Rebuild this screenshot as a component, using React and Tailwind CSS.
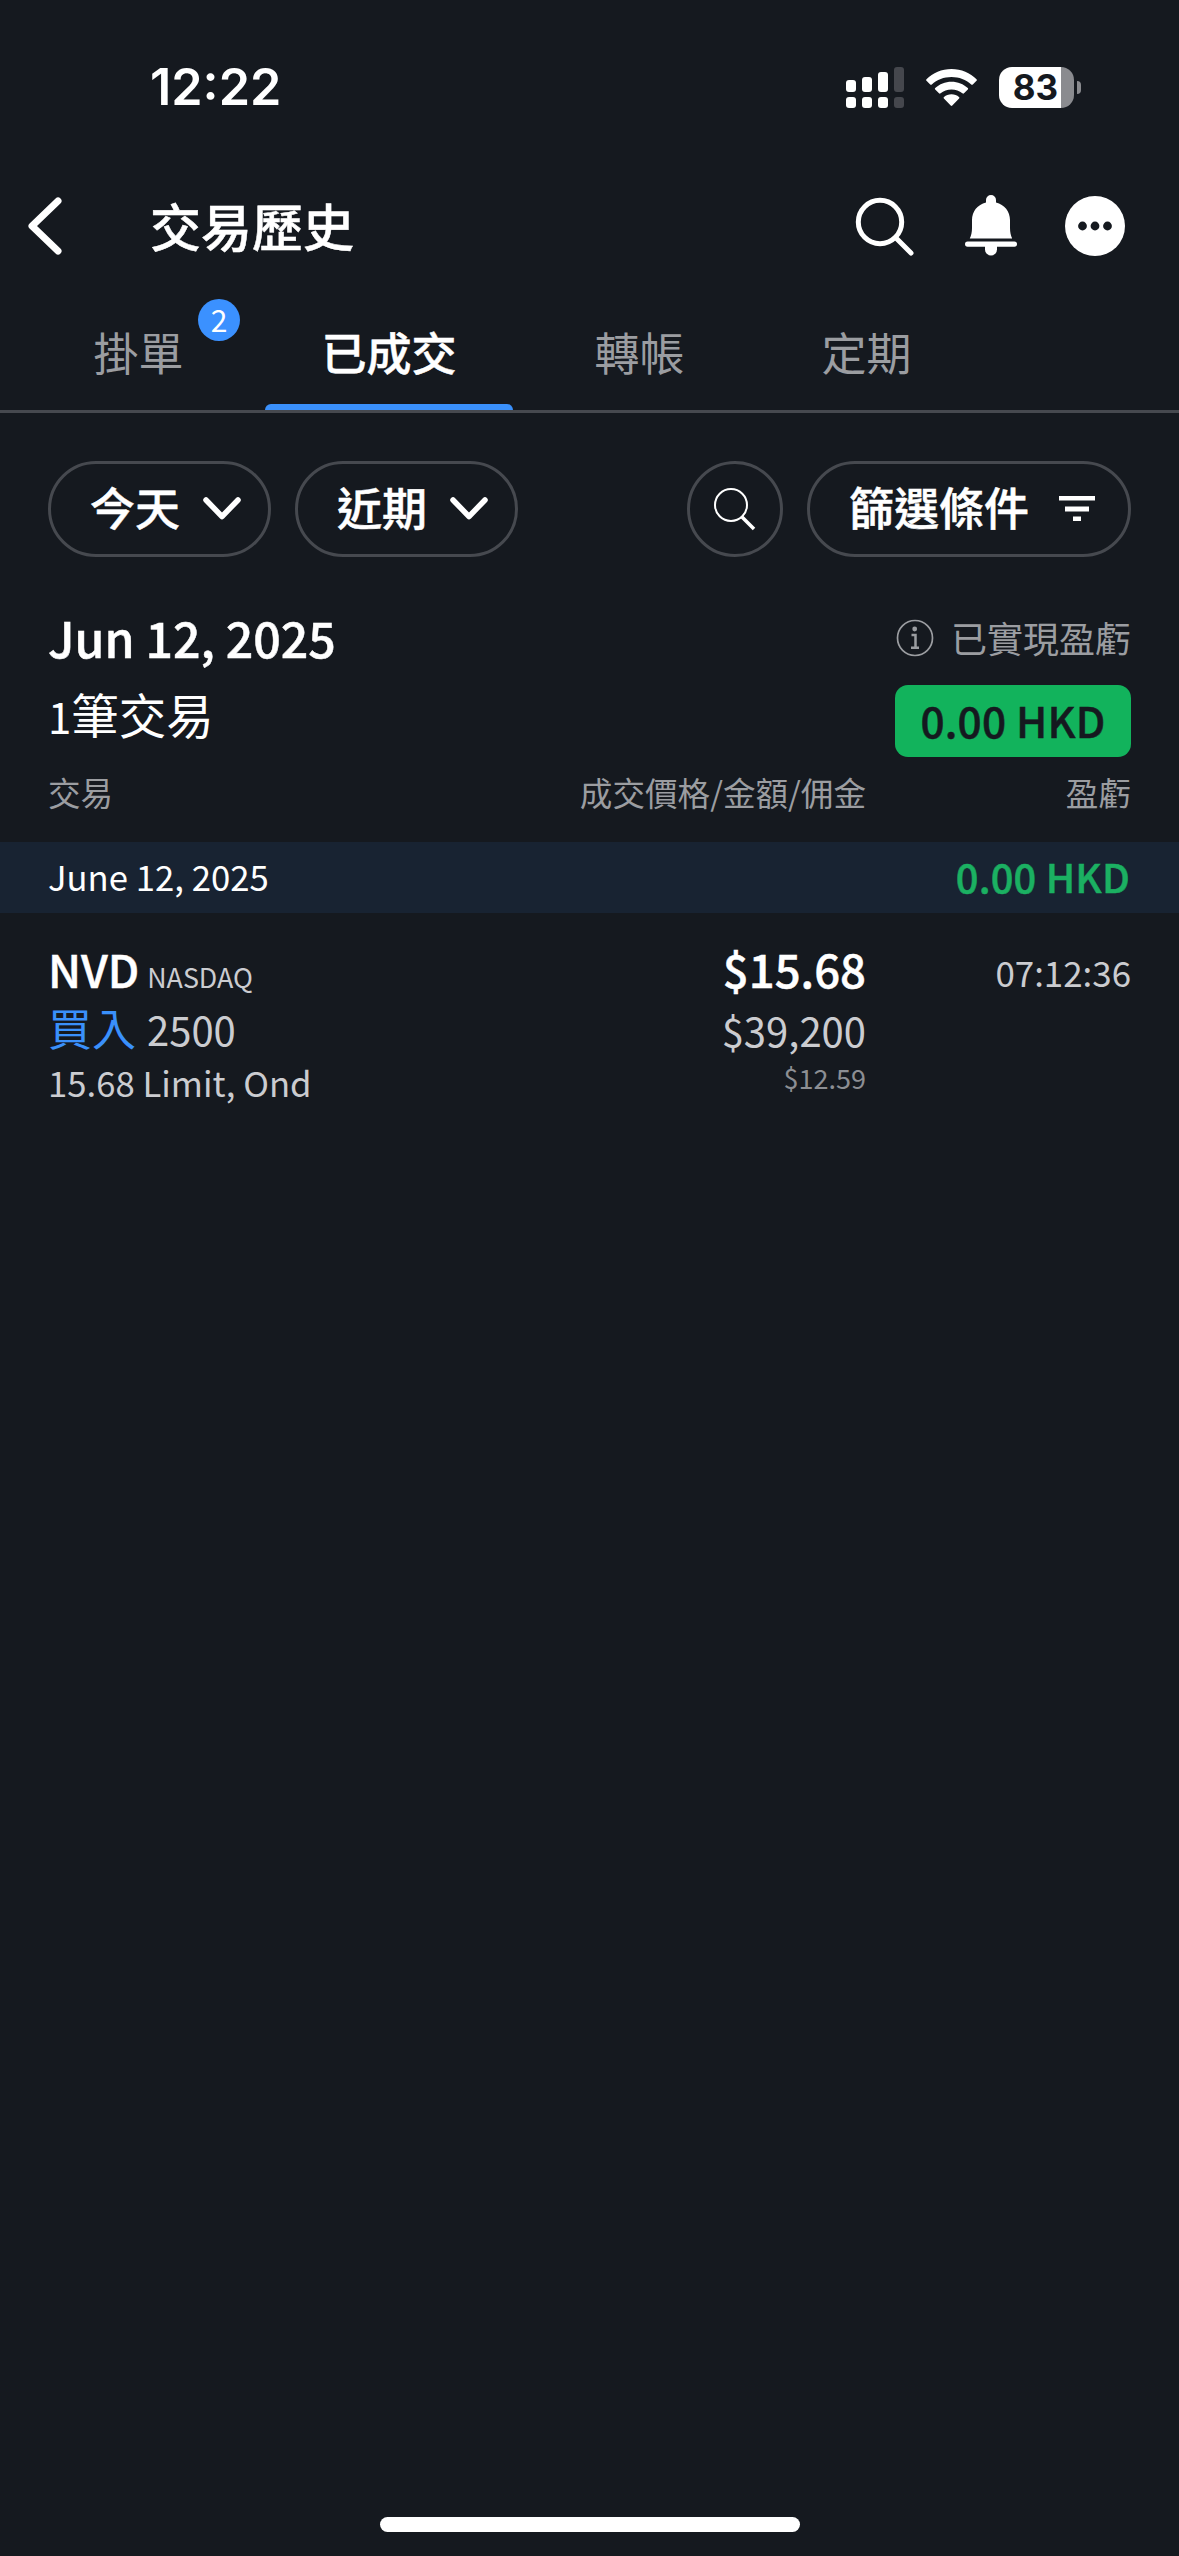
const tabs = [
  { label: "掛單", badge: 2 },
  { label: "已成交", active: true },
  { label: "轉帳" },
  { label: "定期" },
];

const trades = [
  {
    symbol: "NVD",
    exchange: "NASDAQ",
    side: "買入",
    quantity: "2500",
    order: "15.68 Limit, Ond",
    price: "$15.68",
    amount: "$39,200",
    commission: "$12.59",
    time: "07:12:36",
  },
];

// sits between the medium and bold cuts of the font
const demi = "font-medium [-webkit-text-stroke:0.5px]";

function SignalIcon() {
  return (
    <svg width="58" height="41" viewBox="0 0 58 41" fill="#fff">
      <rect x="0" y="13" width="10" height="12" rx="3" />
      <rect x="16" y="10" width="10" height="15" rx="3" />
      <rect x="32" y="5" width="10" height="20" rx="3" />
      <rect x="48" y="0" width="10" height="25" rx="3" fill="#45474d" />
      <rect x="0" y="30" width="10" height="11" rx="3" />
      <rect x="16" y="30" width="10" height="11" rx="3" />
      <rect x="32" y="30" width="10" height="11" rx="3" />
      <rect x="48" y="30" width="10" height="11" rx="3" fill="#45474d" />
    </svg>
  );
}

function WifiIcon() {
  return (
    <svg width="51" height="38" viewBox="0 0 51 38" fill="#fff">
      <path d="M25.5 0C35.3 0 44.2 3.9 50.5 10.2Q51.3 11 50.5 11.8L46.8 15.5Q46 16.2 45.2 15.5C40 10.6 33.1 7.9 25.5 7.9S11 10.6 5.8 15.5Q5 16.2 4.2 15.5L.5 11.8Q-.3 11 .5 10.2C6.8 3.9 15.7 0 25.5 0Z" />
      <path d="M25.5 12.7C31.8 12.7 37.5 15.1 41.8 19Q42.6 19.8 41.8 20.6L38 24.3Q37.2 25 36.4 24.3C33.5 21.8 29.7 20.4 25.5 20.4S17.5 21.8 14.6 24.3Q13.8 25 13 24.3L9.2 20.6Q8.4 19.8 9.2 19C13.5 15.1 19.2 12.7 25.5 12.7Z" />
      <path d="M25.5 25.3C28.4 25.3 31 26.3 33 27.9Q33.9 28.7 33.1 29.5L26.3 36.6Q25.5 37.4 24.7 36.6L17.9 29.5Q17.1 28.7 18 27.9C20 26.3 22.6 25.3 25.5 25.3Z" />
    </svg>
  );
}

function Battery({ level }) {
  return (
    <div className="flex items-center gap-[3px]">
      <div className="flex h-[41px] w-[75px] items-center justify-center overflow-hidden rounded-[13px] bg-linear-to-r from-white from-[83%] to-[#8a8b8f] to-[83%] font-[Inter,sans-serif] text-[35px] font-bold leading-none text-[#15191f]">
        <span className="pr-0.5">{level}</span>
      </div>
      <div className="h-[13px] w-1 rounded-r-full bg-[#8a8b8f]" />
    </div>
  );
}

function SearchIcon() {
  return (
    <svg width="60" height="60" viewBox="0 0 60 60" fill="none" stroke="#fff" strokeWidth="5" strokeLinecap="round">
      <circle cx="25" cy="26" r="21.7" />
      <path d="M41 42L56 57" />
    </svg>
  );
}

function BellIcon() {
  return (
    <svg width="52" height="61" viewBox="0 0 52 61" fill="#fff">
      <path d="M21 7.5V5A5 5 0 0 1 31 5V7.5C39.5 9.5 45 16.5 45 25V33C45 37.5 45.8 40.5 47.2 43.5H4.8C6.2 40.5 7 37.5 7 33V25C7 16.5 12.5 9.5 21 7.5Z" />
      <rect x="0" y="46.5" width="52" height="5.2" rx="2.6" />
      <path d="M20 51H32V54.5A6 6 0 0 1 20 54.5Z" />
    </svg>
  );
}

function MoreIcon() {
  return (
    <svg width="60" height="60" viewBox="0 0 60 60" fill="#15191f">
      <circle cx="30" cy="30" r="30" fill="#fff" />
      <circle cx="17.5" cy="30" r="4.4" />
      <circle cx="30" cy="30" r="4.4" />
      <circle cx="42.5" cy="30" r="4.4" />
    </svg>
  );
}

function ChevronDown() {
  return (
    <svg width="38" height="24" viewBox="0 0 38 24" fill="none" stroke="#fff" strokeWidth="5.5" strokeLinecap="round" strokeLinejoin="round">
      <path d="M3 3L19 19.5L35 3" />
    </svg>
  );
}

function StatusBar() {
  return (
    <div className="flex h-[175px] items-center justify-between pl-[150px] pr-[98px]">
      <span className="font-[Inter,sans-serif] text-[50.3px] font-semibold leading-none">12:22</span>
      <div className="flex items-center gap-[22px]">
        <SignalIcon />
        <WifiIcon />
        <Battery level={83} />
      </div>
    </div>
  );
}

function Header() {
  return (
    <header className="flex h-[101px] items-center pl-7 pr-[54px]">
      <svg width="34" height="58" viewBox="0 0 34 58" fill="none" stroke="#fff" strokeWidth="7" strokeLinecap="round" strokeLinejoin="round">
        <path d="M30 4L4 29L30 54" />
      </svg>
      <h1 className={`ml-[88px] pb-px text-[51px] leading-none ${demi}`}>交易歷史</h1>
      <div className="ml-auto flex items-center">
        <SearchIcon />
        <span className="ml-[50px]">
          <BellIcon />
        </span>
        <span className="ml-[48px]">
          <MoreIcon />
        </span>
      </div>
    </header>
  );
}

function Tabs() {
  return (
    <nav className="flex h-[137px] gap-6 border-b-[3px] border-[#46494f] pl-[37px]">
      {tabs.map((tab) => (
        <button
          key={tab.label}
          className={`relative flex items-center justify-center pt-4 text-[45px] leading-none ${
            tab.active ? `w-[250px] text-white ${demi}` : "w-[203px] text-[#9b9da1]"
          }`}
        >
          {tab.label}
          {tab.badge && (
            <span className="absolute left-[161px] top-[23px] flex size-[42px] items-center justify-center rounded-full bg-[#3b91ff] pb-0.5 text-[30px] text-white">
              {tab.badge}
            </span>
          )}
          {tab.active && <span className="absolute bottom-0 h-1.5 w-[248px] rounded-t-[6px] bg-[#3a90fb]" />}
        </button>
      ))}
    </nav>
  );
}

function Filters() {
  return (
    <div className="mt-12 flex items-center gap-6 px-12">
      {["今天", "近期"].map((label) => (
        <button
          key={label}
          className={`flex h-24 w-[223px] items-center justify-between rounded-full border-[3px] border-[#46494f] pl-[39px] pr-[27px] text-[45px] leading-none ${demi}`}
        >
          <span className="pb-[5px]">{label}</span>
          <ChevronDown />
        </button>
      ))}
      <button className="ml-auto flex size-24 items-center justify-center rounded-full border-[3px] border-[#46494f]">
        <svg width="42" height="44" viewBox="0 0 42 44" fill="none" stroke="#fff">
          <circle cx="17" cy="18" r="16" strokeWidth="2" />
          <path d="M28 30L40 42" strokeWidth="3.5" />
        </svg>
      </button>
      <button className={`flex h-24 w-[324px] items-center justify-between rounded-full border-[3px] border-[#46494f] pl-[39px] pr-[33px] text-[45px] leading-none ${demi}`}>
        <span className="pb-[5px]">篩選條件</span>
        <svg width="36" height="26" viewBox="0 0 36 26" fill="#fff">
          <rect x="0" y="0" width="36" height="4.5" />
          <rect x="6" y="10.5" width="24" height="5" />
          <rect x="14" y="20.5" width="8" height="4.500" />
        </svg>
      </button>
    </div>
  );
}

function Summary() {
  return (
    <section className="mt-[42px] flex justify-between px-12">
      <div>
        <h2 className={`text-[48.3px] leading-[76px] ${demi}`}>Jun 12, 2025</h2>
        <p className="text-[47.5px] leading-[77px]">
          <span className="text-[42px]">1</span>筆交易
        </p>
      </div>
      <div className="flex flex-col items-end">
        <div className="flex h-[74px] items-center gap-[17px] text-[36px] text-[#9b9da1]">
          <svg width="38" height="38" viewBox="0 0 38 38" fill="none" stroke="#9b9da1" strokeWidth="1.7" className="mt-1">
            <circle cx="19" cy="19" r="17.5" />
            <circle cx="18.7" cy="10" r="2.4" fill="#9b9da1" stroke="none" />
            <path d="M15.5 16H19.5V28.5M15 28.8H23" strokeWidth="2.5" />
          </svg>
          <span className="pt-px leading-none">已實現盈虧</span>
        </div>
        <div className={`mt-3 flex h-[72px] w-[236px] items-center justify-center rounded-[13px] bg-[#12b35c] pb-[2px] text-[42.3px] leading-none tracking-[0.2px] text-[#15191f] ${demi}`}>
          0.00 HKD
        </div>
      </div>
    </section>
  );
}

function TradeTable() {
  return (
    <section>
      <div className="mb-[15px] flex px-12 text-[32.6px] leading-[70px] text-[#9b9da1]">
        <span className="w-[200px]">交易</span>
        <span className="w-[618px] text-right">成交價格/金額/佣金</span>
        <span className="flex-1 text-right">盈虧</span>
      </div>
      <div className="flex h-[71px] items-center justify-between bg-[#182332] px-12 pb-[3px] leading-none">
        <span className="text-[34.7px]">June 12, 2025</span>
        <span className={`pr-px text-[39.8px] tracking-[0.2px] text-[#1bb062] ${demi}`}>0.00 HKD</span>
      </div>
      {trades.map((trade) => (
        <div key={trade.symbol} className="mt-[26px] flex px-12 text-[#cbccd0]">
          <div className="w-[418px]">
            <div className="flex h-[60px] items-baseline gap-2 leading-[60px]">
              <span className={`text-[45px] text-white ${demi}`}>{trade.symbol}</span>
              <span className="text-[26.8px] leading-none">{trade.exchange}</span>
            </div>
            <div className="flex h-[60px] items-baseline gap-[11px] leading-[57px]">
              <span className="text-[44px] text-[#3a90fb]">{trade.side}</span>
              <span className="text-[40px] leading-none">{trade.quantity}</span>
            </div>
            <div className="text-[34.7px] leading-[46px]">{trade.order}</div>
          </div>
          <div className="w-[400px] text-right">
            <div className={`text-[45.5px] leading-[59px] text-white ${demi}`}>{trade.price}</div>
            <div className="text-[40px] leading-[64px]">{trade.amount}</div>
            <div className="text-[27px] leading-[32px] text-[#8c8e93]">{trade.commission}</div>
          </div>
          <div className="flex-1 text-right text-[34.9px] leading-[66px]">{trade.time}</div>
        </div>
      ))}
    </section>
  );
}

export default function App() {
  return (
    <div className="flex h-[2556px] w-[1179px] flex-col overflow-hidden bg-[#15191f] font-['Noto_Sans_CJK_TC',sans-serif] text-white">
      <StatusBar />
      <Header />
      <Tabs />
      <Filters />
      <Summary />
      <TradeTable />
      <div className="mx-auto mb-6 mt-auto h-[15px] w-[420px] rounded-full bg-white" />
    </div>
  );
}
